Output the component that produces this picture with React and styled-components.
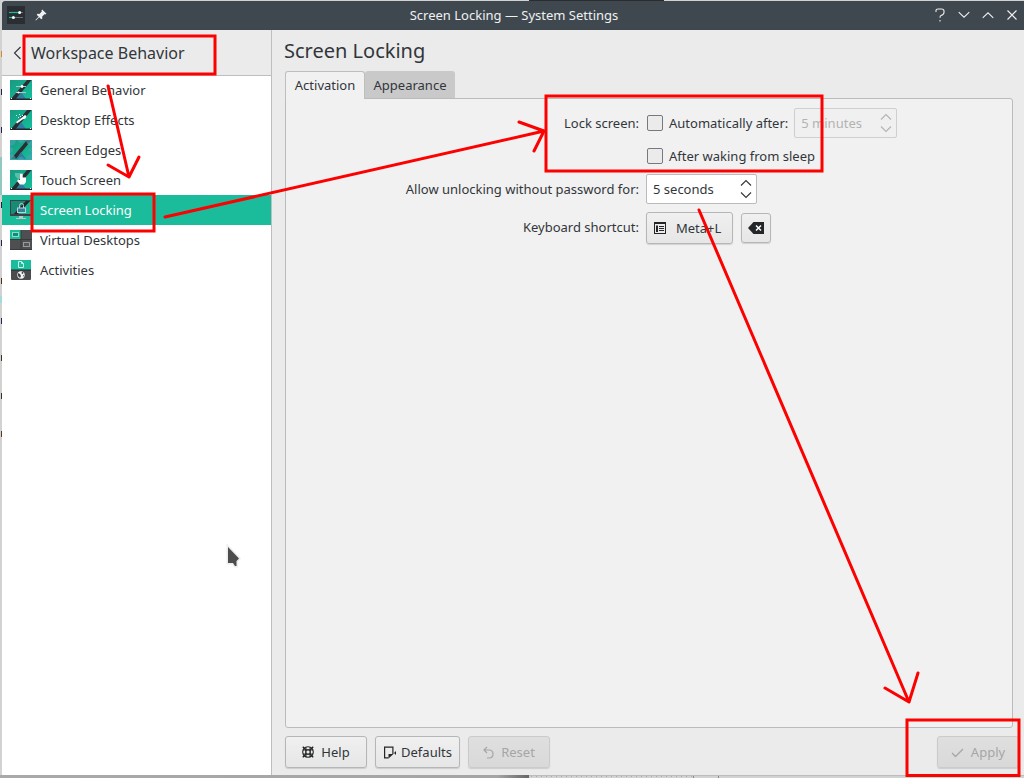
import React from "react";
import styled, { createGlobalStyle, css } from "styled-components";

const GlobalStyle = createGlobalStyle`
  * { box-sizing: border-box; }
  body { margin: 0; overflow: hidden; background: #d2d2d2; }
  button { font: inherit; color: inherit; margin: 0; }
  svg { display: block; flex: none; }
`;

const Desktop = styled.div`
  position: relative;
  width: 1024px;
  height: 778px;
  padding: 1px 0 0 2px;
  background: #d2d2d2;
  font-family: "Noto Sans", sans-serif;
  font-size: 13px;
  line-height: 18px;
  color: #31363b;
  overflow: hidden;
`;

const BackdropArt = styled.svg`
  position: absolute;
  left: 0;
  top: 0;
`;

const Window = styled.div`
  position: relative;
  display: flex;
  flex-direction: column;
  width: 1022px;
  height: 774px;
  background: #ebebeb;
`;

const TitleBar = styled.header`
  display: grid;
  grid-template-columns: 1fr auto 1fr;
  align-items: center;
  height: 29px;
  padding: 0 6px 0 5px;
  background: #40484f;
  color: #eff0f1;
  border-radius: 3px 0 0 0;
`;

const WindowTitle = styled.span`
  padding: 0 0 2px 3px;
`;

const TitleTools = styled.div`
  display: flex;
  align-items: center;
  gap: ${(p) => p.$gap}px;
  padding-bottom: 1px;
  justify-content: ${(p) => (p.$end ? "flex-end" : "flex-start")};
`;

const WindowBody = styled.div`
  display: flex;
  flex: 1;
  min-height: 0;
`;

const Sidebar = styled.aside`
  width: 270px;
  border-right: 1px solid #bcbebf;
  background: #fff;
`;

const SidebarHeader = styled.div`
  display: flex;
  align-items: center;
  gap: 9px;
  height: 46px;
  padding-left: 11px;
  border-bottom: 1px solid #bcbebf;
  background: #ebebeb;
  font-size: 16px;
`;

const NavList = styled.nav`
  margin-top: -1px;
`;

const NavItem = styled.div`
  display: flex;
  align-items: center;
  gap: 8px;
  height: 30px;
  padding-left: 8px;
  ${(p) => p.$active && css`
    background: #1abc9c;
    color: #fcfcfc;
  `}
`;

const Main = styled.main`
  flex: 1;
  display: flex;
  flex-direction: column;
  padding: 0 0 7px 13px;
`;

const PageTitle = styled.h1`
  margin: 7px 0 6px -1px;
  font-size: 20px;
  font-weight: 400;
  line-height: 28px;
`;

const Tabs = styled.div`
  display: flex;
  position: relative;
  z-index: 1;
  margin-bottom: -1px;
`;

const Tab = styled.div`
  width: 90px;
  height: 27px;
  padding-top: 5px;
  border-radius: 3px 3px 0 0;
  background: #c9c9c9;
  text-align: center;
  ${(p) => p.$active && css`
    width: 80px;
    height: 28px;
    padding-top: 4px;
    border: 1px solid #bcbebf;
    border-bottom: 0;
    background: #f1f1f1;
  `}
`;

const Panel = styled.section`
  width: 728px;
  height: 630px;
  padding: 9px 0 0;
  border: 1px solid #b9bbbc;
  border-radius: 0 3px 3px 3px;
  background: #f1f1f1;
`;

const Form = styled.div`
  display: grid;
  grid-template-columns: 353px auto;
  grid-template-rows: 30px 30px 30px 37px;
  row-gap: 3px;
  column-gap: 7px;
  align-items: center;
`;

const FieldLabel = styled.label`
  padding-top: ${(p) => p.$offset || 0}px;
  text-align: right;
  white-space: nowrap;
`;

const Field = styled.div`
  display: flex;
  align-items: center;
  white-space: nowrap;
`;

const ShortcutField = styled(Field)`
  gap: 8px;
  padding-top: 5px;
`;

const CheckBox = styled.span`
  width: 16px;
  height: 16px;
  margin: 0 6px 0 1px;
  border: 1px solid #777a7d;
  border-radius: 2px;
  background: #ebebeb;
`;

const SpinBox = styled.div`
  display: flex;
  align-items: center;
  justify-content: space-between;
  width: ${(p) => p.$width}px;
  height: 30px;
  padding: 0 4px 0 6px;
  border: 1px solid #b9bbbc;
  border-radius: 2px;
  background: #fff;
  ${(p) => p.$disabled && css`
    margin-left: 6px;
    border-color: #cfcfcf;
    background: #f0f0f0;
    color: #b2b3b4;
  `}
`;

const Button = styled.button`
  display: flex;
  align-items: center;
  justify-content: center;
  gap: ${(p) => p.$gap || 5}px;
  width: ${(p) => p.$width}px;
  height: ${(p) => p.$height || 32}px;
  padding: 0;
  border: 1px solid #b4b6b7;
  border-radius: 3px;
  background: linear-gradient(#f0f0f0, #e6e6e6);
  box-shadow: 0 1px 1px rgba(0, 0, 0, 0.13);
  ${(p) => p.$disabled && css`
    border-color: #cbcbcb;
    background: linear-gradient(#dfdfdf, #d9d9d9);
    color: #a5a6a7;
  `}
`;

const ShortcutButton = styled(Button)`
  justify-content: flex-start;
  padding-left: 7px;
`;

const Footer = styled.footer`
  display: flex;
  gap: 8px;
  margin-top: 8px;
  padding-right: 5px;
`;

const Spacer = styled.div`
  flex: 1;
`;

const Annotations = styled.svg`
  position: absolute;
  left: 0;
  top: 0;
  pointer-events: none;
`;

const Glyph = ({ w, h, d, sw = 1.1 }) => (
  <svg width={w} height={h} viewBox={`0 0 ${w} ${h}`} fill="none" stroke="currentColor" strokeWidth={sw}>
    <path d={d} />
  </svg>
);

const SettingsIcon = () => (
  <svg width="18" height="18" viewBox="0 0 18 18">
    <rect width="18" height="18" fill="#2a2e32" />
    <path d="M2 6.5h11" stroke="#1abc9c" strokeWidth="1.2" />
    <path d="M13 6.5h3M6 11.5h10" stroke="#6b7075" />
    <path d="M2 11.5h4" stroke="#1abc9c" strokeWidth="1.2" />
    <circle cx="12.6" cy="6.5" r="1.5" fill="#fff" />
    <circle cx="6.4" cy="11.5" r="1.5" fill="#fff" />
  </svg>
);

const PinIcon = () => (
  <svg width="12" height="12" viewBox="0 0 12 12" fill="#eff0f1">
    <path d="M7.2.5 11.5 4.8 10.5 5.5 9.8 5.1 7.2 7.5 7.3 9.4 6.2 10.2 4.2 8.2.9 11.5.4 11 3.7 7.7 1.7 5.8 2.6 4.8 4.5 5 6.9 2.3 6.4 1.4Z" />
  </svg>
);

const Wallpaper = ({ id, base = true, children }) => (
  <svg width="22" height="20" viewBox="0 0 22 20">
    <defs>
      <linearGradient id={id} x1="0" y1="0" x2="1" y2="1">
        <stop offset="0" stopColor="#189a82" />
        <stop offset="1" stopColor="#14c09c" />
      </linearGradient>
    </defs>
    <rect width="22" height="20" fill={`url(#${id})`} />
    <path d="M17 0h4.5L6 19H1Z" fill="#2a2e32" />
    <path d="M11 12 16 19H6.5Z" fill="#2f7ca3" />
    {base && (
      <>
        <path d="M0 19.25h22" stroke="#23272b" strokeWidth="1.5" />
        <path d="M1 18.5h1M20 18.5h1" stroke="#fff" />
      </>
    )}
    {children}
  </svg>
);

const GeneralIcon = () => (
  <Wallpaper id="general">
    <path d="M6 6.5h10M6 12.5h10" stroke="#a8c9c4" />
    <circle cx="12" cy="6.5" r="1.4" fill="#fff" />
    <circle cx="8.5" cy="12.5" r="1.1" fill="#fff" />
  </Wallpaper>
);

const EffectsIcon = () => (
  <Wallpaper id="effects">
    <path d="M6 12 12 7.5 15 5l1.5 1-1 2.5-3 1L7 13.5Z" fill="#fff" />
    <path d="M6 5.5h1M9 4.5h1M12 5.5h1M8 7.5h1M10 6.5h1" stroke="#dff" />
  </Wallpaper>
);

const EdgesIcon = () => (
  <Wallpaper id="edges" base={false}>
    <g fill="#4aa3b3" opacity=".65">
      <path d="M0 0h6a6 6 0 0 1-6 6ZM22 0v6a6 6 0 0 1-6-6ZM0 20v-6a6 6 0 0 1 6 6ZM22 20h-6a6 6 0 0 1 6-6Z" />
      <path d="M8 0h6a3 3 0 0 1-6 0ZM8 20a3 3 0 0 1 6 0ZM0 7a3 3 0 0 1 0 6ZM22 7a3 3 0 0 0 0 6Z" />
    </g>
  </Wallpaper>
);

const TouchIcon = () => (
  <Wallpaper id="touch">
    <path d="M5 3h8v6H8L5 6Z" fill="#96cfc6" opacity=".55" />
    <path d="M10 4h2.5v3.5H16V12l-2 2.5h-4L7 11l1-1.5 2 .5Z" fill="#fff" />
  </Wallpaper>
);

const LockIcon = () => (
  <svg width="22" height="20" viewBox="0 0 22 20">
    <rect width="22" height="16" fill="#3d4246" />
    <path d="M1 1h15L4 14H1Z" fill="#178b76" />
    <path d="M20 1 7 14h14V1Z" fill="#19b494" />
    <path d="M16 1h4L8 14H4Z" fill="#23272b" />
    <path d="M9.5 8V5.5a2 2 0 0 1 4 0V8" fill="none" stroke="#b9cfd0" />
    <rect x="7.5" y="8" width="8" height="4.5" fill="#377f94" stroke="#b9d4d8" />
    <path d="M9 16h4v2h3v1H6v-1h3Z" fill="#b9c8c7" />
  </svg>
);

const DesktopsIcon = () => (
  <svg width="22" height="20" viewBox="0 0 22 20">
    <rect width="22" height="20" fill="#37393b" />
    <rect width="10.5" height="9" fill="#1abc9c" />
    <path d="M11.5 0H22v9H11.5ZM0 10h10.5v9H0ZM11.5 10H22v9H11.5Z" fill="#4d4f51" />
    <rect x="2.5" y="2.5" width="6" height="4" fill="#148b75" stroke="#8fd8c8" />
    <rect x="13.5" y="12.5" width="6" height="4" fill="#55585a" stroke="#999" />
  </svg>
);

const ActivitiesIcon = () => (
  <svg width="22" height="20" viewBox="0 0 22 20">
    <rect x="1" width="20" height="20" rx="1" fill="#4a4c4e" />
    <rect x="1" width="20" height="10" fill="#1abc9c" />
    <rect x="1" y="9.5" width="20" height="1" fill="#25292c" />
    <path d="M8.5 1.5h3l2 2v4h-5Z M11.5 1.5v2h2" fill="none" stroke="#c4f3e8" />
    <circle cx="11" cy="15" r="3.7" fill="#f5f5f5" />
    <path d="m8 13 2 1 1 2-1 2-2-2Zm4-1.5 1.5 1-.5 1.5-1.5-.5Zm1 3.5 1 .3-1 1.7Z" fill="#424446" />
  </svg>
);

const StepArrows = () => (
  <Glyph w={12} h={20} sw={1.1} d="M1 6.5 6 1.5l5 5M1 13.5l5 5 5-5" />
);

const ShortcutIcon = () => (
  <svg width="12" height="12" viewBox="0 0 12 12">
    <path fill="#232629" fillRule="evenodd" d="M0 0h12v12H0ZM1 2v9h10V2Z" />
    <path fill="#232629" d="M2 3.5h2V10H2ZM5 4h5v1H5ZM5 6h5v1H5ZM5 8h5v1H5Z" />
  </svg>
);

const ClearIcon = () => (
  <svg width="16" height="12" viewBox="0 0 16 12">
    <path d="M5.5 0H16v12H5.5L0 6Z" fill="#232629" />
    <path d="m8 3.5 5 5m0-5-5 5" stroke="#fff" strokeWidth="1.5" />
  </svg>
);

const HelpIcon = () => (
  <svg width="12" height="12" viewBox="0 0 12 12" fill="none" stroke="#232629">
    <circle cx="6" cy="6" r="5.3" strokeWidth="1.1" />
    <circle cx="6" cy="6" r="2.4" />
    <path d="m.8.8 3.4 3.4m3.6 3.6 3.4 3.4m0-10.4L7.8 4.2M4.2 7.8.8 11.2" strokeWidth="1.5" />
    <path d="M4 .8v10.4M8 .8v10.4M.8 4h10.4M.8 8h10.4" strokeWidth=".9" />
  </svg>
);

const DefaultsIcon = () => (
  <svg width="14" height="13" viewBox="0 0 14 13">
    <path d="M5.5 11.9H1.6V1.1h8.3V8" fill="none" stroke="#232629" strokeWidth="1.2" />
    <path d="M5.5 8h5l-5 4.5ZM11 7l2-2v4Z" fill="#232629" />
  </svg>
);

const navItems = [
  ["General Behavior", GeneralIcon],
  ["Desktop Effects", EffectsIcon],
  ["Screen Edges", EdgesIcon],
  ["Touch Screen", TouchIcon],
  ["Screen Locking", LockIcon],
  ["Virtual Desktops", DesktopsIcon],
  ["Activities", ActivitiesIcon],
];

const edgeMarks = [
  [54, "#d58a26"], [92, "#20244a"], [130, "#20244a"], [205, "#21233d"],
  [243, "#28244d"], [281, "#4b321b"], [321, "#272453"], [358, "#3c3025"],
  [396, "#3c3025"], [434, "#583b1b"],
];

export default function App() {
  return (
    <>
      <GlobalStyle />
      <Desktop>
        <BackdropArt width="1024" height="778">
          <defs>
            <linearGradient id="shade">
              <stop offset="0" stopColor="#a9a9a9" />
              <stop offset=".94" stopColor="#a5a5a5" />
              <stop offset="1" stopColor="#666" />
            </linearGradient>
          </defs>
          <path d="M529 .5h135" stroke="#292d30" />
          <rect y="157" width="2" height="38" fill="#91c9c0" />
          <rect y="296" width="2" height="7" fill="#a5dadd" />
          {edgeMarks.map(([y, color]) => (
            <rect key={y} x="1" y={y - 3} width="1" height="6" fill={color} />
          ))}
          <rect y="775" width="529" height="3" fill="url(#shade)" />
          <path d="M531 776.5h162" stroke="#aaa" strokeDasharray="1 4" />
          <path d="M693.5 775v3M718.5 775v3" stroke="#888" />
          <path d="M529 775.5h495" stroke="#bdbdbd" />
        </BackdropArt>
        <Window>
          <TitleBar>
            <TitleTools $gap={10}>
              <SettingsIcon />
              <PinIcon />
            </TitleTools>
            <WindowTitle>Screen Locking — System Settings</WindowTitle>
            <TitleTools $end $gap={12}>
              <Glyph w={12} h={14} d="M2 4V2.3Q2 1 4 1h3.5Q10 1 10 3v1.5Q10 6.5 7 7.5 6 8 6 9.7M6 12v1.4" />
              <Glyph w={12} h={8} d="m.7 1.2 5.3 5 5.3-5" />
              <Glyph w={12} h={8} d="m.7 6.8 5.3-5 5.3 5" />
              <Glyph w={12} h={12} d="m1.5 1.5 9 9m0-9-9 9" />
            </TitleTools>
          </TitleBar>
          <WindowBody>
            <Sidebar>
              <SidebarHeader>
                <Glyph w={9} h={14} d="M7.5 1 1.5 7l6 6" />
                <span>Workspace Behavior</span>
              </SidebarHeader>
              <NavList>
                {navItems.map(([label, Icon]) => (
                  <NavItem key={label} $active={label === "Screen Locking"}>
                    <Icon />
                    {label}
                  </NavItem>
                ))}
              </NavList>
            </Sidebar>
            <Main>
              <PageTitle>Screen Locking</PageTitle>
              <Tabs>
                <Tab $active>Activation</Tab>
                <Tab>Appearance</Tab>
              </Tabs>
              <Panel>
                <Form>
                  <FieldLabel>Lock screen:</FieldLabel>
                  <Field>
                    <CheckBox />
                    Automatically after:
                    <SpinBox $width={103} $disabled>
                      5 minutes <StepArrows />
                    </SpinBox>
                  </Field>
                  <span />
                  <Field>
                    <CheckBox />
                    After waking from sleep
                  </Field>
                  <FieldLabel>Allow unlocking without password for:</FieldLabel>
                  <Field>
                    <SpinBox $width={111}>
                      5 seconds <StepArrows />
                    </SpinBox>
                  </Field>
                  <FieldLabel $offset={2}>Keyboard shortcut:</FieldLabel>
                  <ShortcutField>
                    <ShortcutButton $width={87} $gap={10}>
                      <ShortcutIcon /> Meta+L
                    </ShortcutButton>
                    <Button $width={30} $height={30}>
                      <ClearIcon />
                    </Button>
                  </ShortcutField>
                </Form>
              </Panel>
              <Footer>
                <Button $width={82} $gap={7}><HelpIcon /> Help</Button>
                <Button $width={85} $gap={4}><DefaultsIcon /> Defaults</Button>
                <Button $width={82} $gap={7} $disabled>
                  <Glyph w={11} h={13} sw={1.2} d="M4 1 1 4l3 3M1 4h5q4 0 4 4t-4 4H4" />
                  Reset
                </Button>
                <Spacer />
                <Button $width={82} $gap={7} $disabled>
                  <Glyph w={13} h={11} sw={1.3} d="m1 6 3.5 3.5L12 2" />
                  Apply
                </Button>
              </Footer>
            </Main>
          </WindowBody>
        </Window>
        <Annotations width="1024" height="778" fill="none">
          <path d="M228 547v16h5l2 3h1.5v-5l2.5-2.5Z" fill="#4d4d4d" stroke="#eee" strokeWidth="3" paintOrder="stroke" />
          <g stroke="#fd0000" strokeWidth="3">
            <rect x="24" y="36" width="191" height="38" />
            <rect x="32" y="194" width="122" height="37" />
            <rect x="546" y="96" width="276" height="75" />
            <rect x="907" y="720" width="112" height="55.5" />
            <g strokeLinecap="round" strokeLinejoin="round">
              <path d="M108 86 129 177M108 165l21 12 10-20" />
              <path d="M165 217 544 131M519 122l25 9-10 20" />
              <path d="M699 210 909 702M885 688l24 14 9-29" />
            </g>
          </g>
        </Annotations>
      </Desktop>
    </>
  );
}
